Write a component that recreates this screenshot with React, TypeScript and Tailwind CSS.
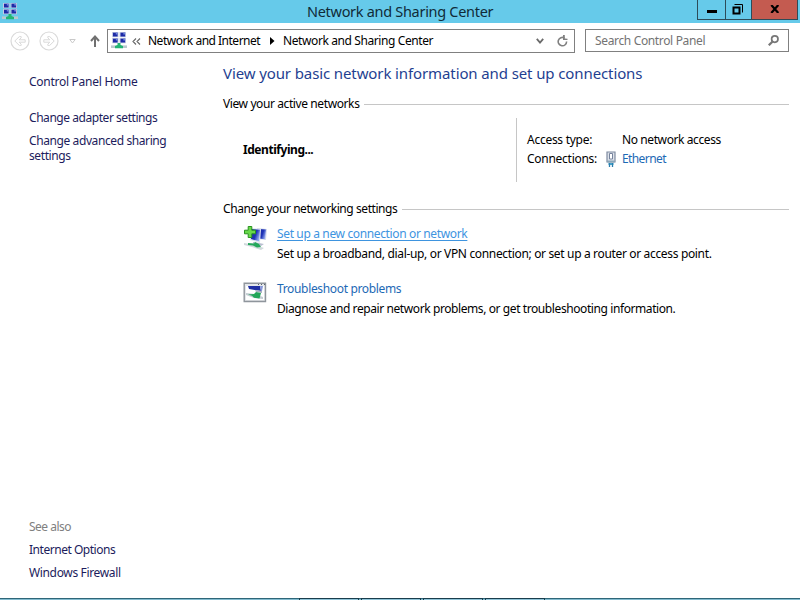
import React from "react";

function NetworkIcon() {
  return (
    <svg width="16" height="17" viewBox="0 0 16 17" className="shrink-0">
      {[[1, 0], [8.5, 0], [1, 6], [8.5, 6]].map(([x, y]) => (
        <g key={`${x}-${y}`}>
          <rect x={x} y={y} width="6.5" height="5.2" fill="#c3cbe2" />
          <rect x={x + 1} y={y + 0.7} width="4.6" height="3.8" fill="#1d2aa6" />
          <rect x={x + 3.8} y={y + 0.7} width="1.8" height="1.8" fill="#6f86dd" />
        </g>
      ))}
      <rect x="0" y="13.4" width="16" height="2.6" fill="#b9c9cd" />
      <path d="M6.5 11h3v2l2.5 1v2.2H4V14l2.5-1z" fill="#22b573" />
    </svg>
  );
}

function RoundArrow({ flip = false }: { flip?: boolean }) {
  return (
    <svg width="20" height="20" viewBox="0 0 20 20" fill="none" stroke="#d9d9d9" className={flip ? "-scale-x-100" : ""}>
      <circle cx="10" cy="10" r="9" strokeWidth="1.2" />
      <path d="M4.8 10 9.3 5.6h1.9v1.2L9.2 8.8h6v2.4h-6l2 2v1.2H9.3z" strokeWidth="1" />
    </svg>
  );
}

function TitleBar() {
  return (
    <header className="flex h-[23px] bg-[#66caea] pl-0.5">
      <div className="w-[305px] pt-[3px]"><NetworkIcon /></div>
      <h1 className="w-[390px] text-[14.5px] leading-[23px] tracking-[-0.3px] text-[#102b38]">Network and Sharing Center</h1>
      <div className="flex h-5 w-[101px] border border-t-0 border-[#2d4c59]">
        <div className="flex w-[28px] items-center justify-center border-r border-[#2d4c59]">
          <div className="mt-1 h-[3px] w-[10px] bg-black" />
        </div>
        <div className="flex w-[26px] items-center justify-center border-r border-[#2d4c59]">
          <svg width="11" height="11" viewBox="0 0 11 11" fill="none" stroke="#000" className="-ml-0.5 -mt-px">
            <path d="M2.5 .5h8v8" />
            <rect x="1.5" y="3.5" width="6" height="6" strokeWidth="2" />
          </svg>
        </div>
        <div className="flex flex-1 items-center justify-center bg-[#c45b50]">
          <svg width="10" height="8" viewBox="0 0 10 8" stroke="#000" strokeWidth="2.2" className="-mt-px">
            <path d="m1.3 0 7 8M8.3 0l-7 8" />
          </svg>
        </div>
      </div>
    </header>
  );
}

function NavBar() {
  return (
    <nav className="flex h-[36px] items-start pt-[6px] pl-[10px]">
      <div className="flex w-[97px] items-center pt-[2px]">
        <RoundArrow />
        <div className="ml-[9px]"><RoundArrow flip /></div>
        <svg width="7" height="5" viewBox="0 0 7 5" fill="none" stroke="#c9c9c9" className="ml-[10px]"><path d="M.8.5h5.4L3.5 4z" /></svg>
        <svg width="10" height="12" viewBox="0 0 10 12" fill="none" stroke="#707070" strokeWidth="2" className="ml-[14px]">
          <path d="M5 12V1.5M1 6l4-4.4L9 6" />
        </svg>
      </div>
      <div className="flex h-6 w-[468px] items-center border border-[#808080] pl-[3px] text-black">
        <div className="-mt-0.5"><NetworkIcon /></div>
        <svg width="9" height="7" viewBox="0 0 9 7" fill="none" stroke="#666" strokeWidth="1.1" className="ml-[5px]"><path d="m4 .5-3 3 3 3M8 .5l-3 3 3 3" /></svg>
        <span className="ml-[7px] w-[122px] tracking-[-0.5px]">Network and Internet</span>
        <svg width="5" height="8" viewBox="0 0 5 8"><path d="M0 0v8l4.5-4z" /></svg>
        <span className="ml-[8px] w-[254px] tracking-[-0.4px]">Network and Sharing Center</span>
        <svg width="8" height="6" viewBox="0 0 8 6" fill="none" stroke="#6b6b6b" strokeWidth="1.8" className="-ml-px"><path d="m.8.8 3.2 3.7L7.2.8" /></svg>
        <svg width="11" height="12" viewBox="0 0 11 12" fill="none" stroke="#808080" strokeWidth="1.6" className="ml-[13px]">
          <path d="M9.6 6.5A4.2 4.2 0 1 1 7.4 2.9" />
          <path d="M6 0v5h4.5V3.8L7.8 3.6V0z" fill="#808080" stroke="none" />
        </svg>
      </div>
      <div className="ml-[10px] flex h-[23px] w-[204px] items-center border border-[#808080] pl-[9px] text-[#737373]">
        <span className="w-[173px] pt-px tracking-[-0.35px]">Search Control Panel</span>
        <svg width="11" height="11" viewBox="0 0 11 11" fill="none" stroke="#777">
          <circle cx="6.8" cy="4.1" r="3.2" strokeWidth="1.7" />
          <path d="M4.6 6.4.8 10.3" strokeWidth="2.2" />
        </svg>
      </div>
    </nav>
  );
}

function Sidebar() {
  return (
    <aside className="flex w-[223px] flex-col pt-[15px] pl-[29px] text-[#1c1c5c]">
      <a className="tracking-[-0.27px]">Control Panel Home</a>
      <a className="mt-5 tracking-[-0.45px]">Change adapter settings</a>
      <a className="mt-[7px] tracking-[-0.4px]">Change advanced sharing</a>
      <a className="-mt-px tracking-[-0.4px]">settings</a>
      <div className="mt-auto mb-[17px] flex flex-col gap-[7px]">
        <span className="tracking-[-0.5px] text-[#808080]">See also</span>
        <a className="tracking-[-0.47px]">Internet Options</a>
        <a className="tracking-[-0.35px]">Windows Firewall</a>
      </div>
    </aside>
  );
}

function EthernetIcon() {
  return (
    <svg width="10" height="16" viewBox="0 0 10 16" className="ml-[9px]">
      <path d="M1 1h8v10H1z" fill="#dde2ea" stroke="#7e8a9f" strokeWidth="1.2" />
      <path d="M3.5 2.5h3v5.5h-3z" fill="#fff" stroke="#76839c" />
      <path d="M1.5 9.5h7v2h-7z" fill="#8aa9bb" />
      <path d="M2.5 12h5v2h-5z" fill="#4aa6cd" />
      <path d="M3.5 12v4M6.5 12v4" stroke="#2a7fae" strokeWidth="1.3" />
    </svg>
  );
}

function ConnectionIcon() {
  return (
    <svg width="26" height="26" viewBox="0 0 26 26">
      <defs>
        <linearGradient id="screen" x2="1" y2=".5"><stop stopColor="#1526a0" /><stop offset=".6" stopColor="#2034b8" /><stop offset="1" stopColor="#91a6ee" /></linearGradient>
      </defs>
      <path d="m14 3 10 1-1 11-8-1z" fill="#d4daec" />
      <path d="m16 4 7 .6-1 9.6-6-.8z" fill="url(#screen)" />
      <path d="m7 3 11 1-1 14-10-3z" fill="#dfe4f0" />
      <path d="m8 4 9 .8-1 11.4L8 14z" fill="url(#screen)" />
      <path d="m10 17 6 1 5 1-3 2-8-2z" fill="#b8bed0" />
      <path d="m1 18 11 2 9 3-3 2-9-3-8-2z" fill="#d0d9dc" />
      <path d="m5 18 6 .5 1-1.5 4 2 2 3-4 .5-4-2-5-.5z" fill="#25a85c" />
      <path d="M5.2 1.5h3.6v3.7h3.7v3.6H8.8v3.7H5.2V8.8H1.5V5.2h3.7z" fill="#69d94a" stroke="#29931f" />
    </svg>
  );
}

function TroubleshootIcon() {
  return (
    <svg width="24" height="21" viewBox="0 0 24 21">
      <path d="M1.2 1.2h21.3v18.3H1.2z" fill="#e4e7ea" stroke="#8f959c" strokeWidth="1.4" />
      <path d="M15 2.5h1M18 2.5h1M21 2.5h1" stroke="#59616a" />
      <path d="M3 4h18v14H3z" fill="#fff" />
      <path d="M5 4h12l1 5-12-2z" fill="#2030a4" />
      <path d="M17 4h3l-1 5h-1z" fill="#8797da" />
      <path d="m12 8 7 1v2l-6-1z" fill="#a9b0c0" />
      <path d="m3 11 9 1 8 3v2l-9-1-8-3z" fill="#c3cdd2" />
      <path d="m5 12.5 6-.5 2-2 5 1-1.5 5.500-5.500-.7-2-2z" fill="#22a659" />
    </svg>
  );
}

function SectionRule() {
  return <div className="mt-px mr-[11px] ml-[5px] h-px flex-1 bg-[#c6c6c6]" />;
}

function Content() {
  return (
    <main className="flex-1 text-black">
      <h2 className="mt-1 text-[15px] leading-[20px] tracking-[-0.11px] text-[#1f3f91]">View your basic network information and set up connections</h2>
      <div className="mt-[13px] flex items-center"><h3 className="tracking-[-0.4px]">View your active networks</h3><SectionRule /></div>
      <div className="mt-[6px] flex h-16">
        <div className="w-[293px] pt-[24px] pl-5 font-bold tracking-[-0.45px]">Identifying...</div>
        <div className="border-l border-[#c6c6c6] pt-[14px] pl-[10px]">
          <div className="flex"><span className="w-[95px] tracking-[-0.27px]">Access type:</span><span className="tracking-[-0.4px]">No network access</span></div>
          <div className="mt-[3px] flex items-center">
            <span className="w-[70px] tracking-[-0.27px]">Connections:</span>
            <EthernetIcon />
            <a className="ml-[6px] tracking-[-0.6px] text-[#1d69b5]">Ethernet</a>
          </div>
        </div>
      </div>
      <div className="mt-[19px] flex items-center"><h3 className="tracking-[-0.43px]">Change your networking settings</h3><SectionRule /></div>
      <div className="mt-[8px] flex pl-5">
        <div className="w-[34px]"><ConnectionIcon /></div>
        <div className="flex flex-col gap-1 pt-px">
          <a className="w-fit tracking-[-0.36px] text-[#3e94df] underline underline-offset-[2px]">Set up a new connection or network</a>
          <p className="tracking-[-0.34px]">Set up a broadband, dial-up, or VPN connection; or set up a router or access point.</p>
        </div>
      </div>
      <div className="mt-[18px] flex pl-5">
        <div className="w-[34px] pt-0.5"><TroubleshootIcon /></div>
        <div className="flex flex-col gap-1 pt-px">
          <a className="tracking-[-0.34px] text-[#1d69b5]">Troubleshoot problems</a>
          <p className="tracking-[-0.41px]">Diagnose and repair network problems, or get troubleshooting information.</p>
        </div>
      </div>
    </main>
  );
}

export default function App() {
  return (
    <div className="flex h-[600px] w-[800px] flex-col overflow-hidden bg-white font-['Noto_Sans','Open_Sans',sans-serif] text-[12px] leading-[16px] whitespace-nowrap">
      <TitleBar />
      <NavBar />
      <div className="flex flex-1"><Sidebar /><Content /></div>
      <footer className="flex h-0.5 border-t border-[#2f6678] bg-[#83bcd0] pl-[299px]">
        {[0, 1, 2, 3].map((n) => (
          <div key={n} className="-mt-px mr-0.5 h-0.5 w-[60px] border-x border-t border-[#1a3d4c] bg-[#8fc4d8]" />
        ))}
      </footer>
    </div>
  );
}
